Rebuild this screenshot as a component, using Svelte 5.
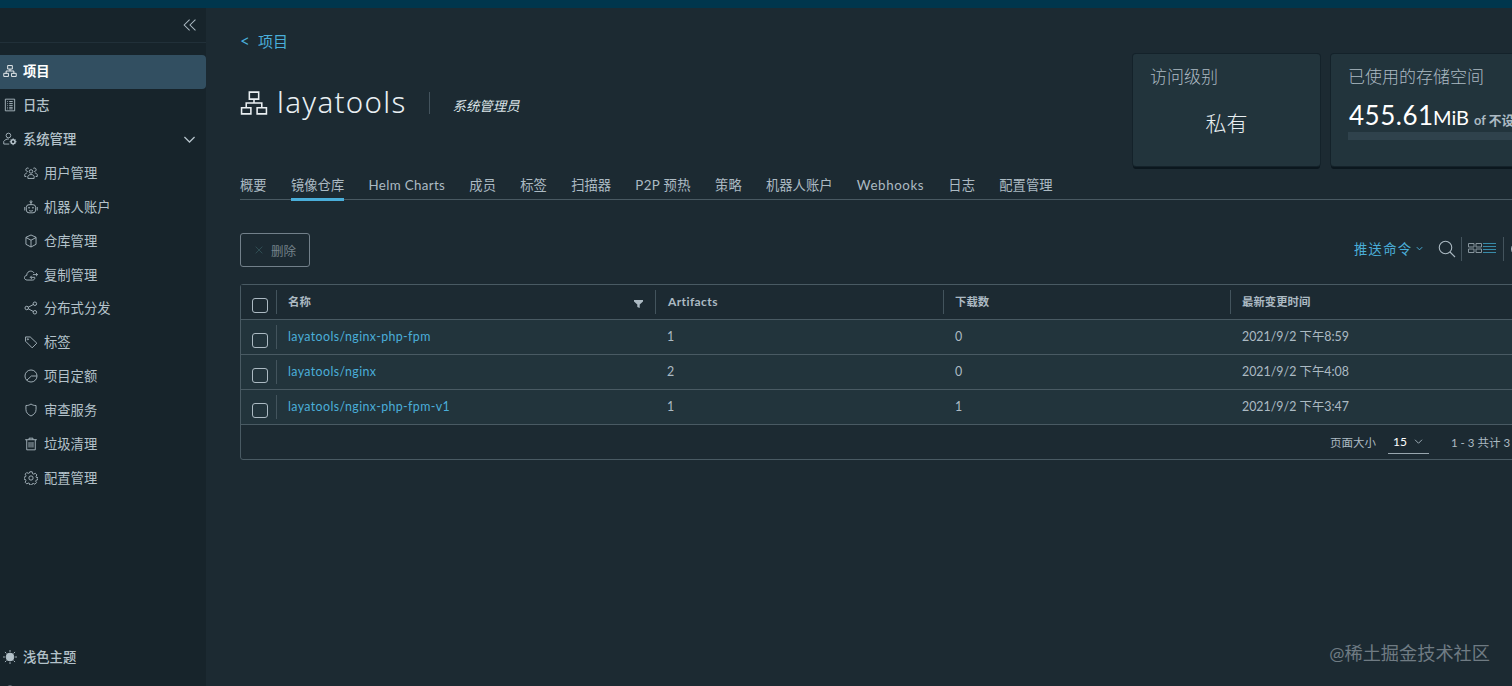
<script lang="ts">
	interface NavItem {
		icon: string;
		label: string;
	}

	interface Repo {
		name: string;
		artifacts: number;
		pulls: number;
		updated: string;
	}

	const ADMIN: NavItem[] = [
		{ icon: 'users', label: '用户管理' },
		{ icon: 'robot', label: '机器人账户' },
		{ icon: 'cube', label: '仓库管理' },
		{ icon: 'cloud', label: '复制管理' },
		{ icon: 'share', label: '分布式分发' },
		{ icon: 'tag', label: '标签' },
		{ icon: 'quota', label: '项目定额' },
		{ icon: 'shield', label: '审查服务' },
		{ icon: 'trash', label: '垃圾清理' },
		{ icon: 'cog', label: '配置管理' }
	];

	const TABS = [
		'概要',
		'镜像仓库',
		'Helm Charts',
		'成员',
		'标签',
		'扫描器',
		'P2P 预热',
		'策略',
		'机器人账户',
		'Webhooks',
		'日志',
		'配置管理'
	];

	const REPOS: Repo[] = [
		{ name: 'layatools/nginx-php-fpm', artifacts: 1, pulls: 0, updated: '2021/9/2 下午8:59' },
		{ name: 'layatools/nginx', artifacts: 2, pulls: 0, updated: '2021/9/2 下午4:08' },
		{ name: 'layatools/nginx-php-fpm-v1', artifacts: 1, pulls: 1, updated: '2021/9/2 下午3:47' }
	];

	let activeTab = $state('镜像仓库');
	let adminOpen = $state(true);
	let selected = $state<string[]>([]);

	function toggle(name: string) {
		selected = selected.includes(name) ? selected.filter((n) => n !== name) : [...selected, name];
	}

	function toggleAll() {
		selected = selected.length === REPOS.length ? [] : REPOS.map((r) => r.name);
	}
</script>

{#snippet icon(name: string)}
	<svg class="icon" viewBox="0 0 36 36" aria-hidden="true">
		{#if name === 'org'}
			<path d="M12 4h12v9H12zM2 24h12v8H2zM22 24h12v8H22zM18 13v5M8 24v-6h20v6" />
		{:else if name === 'list'}
			<path d="M6 3h24v30H6zM11 9h2M16 9h9M11 14h2M16 14h9M11 19h2M16 19h9M11 24h2M16 24h9M11 28h2M16 28h9" />
		{:else if name === 'admin'}
			<circle cx="14" cy="9" r="6" />
			<path d="M16 31H2v-7c3-4 7-6 13-6" />
			<circle cx="26" cy="25" r="5" stroke-width="4" />
			<path d="M26 16v4M26 30v4M17 25h4M31 25h4M20 19l2 2M30 29l2 2M32 19l-2 2M22 29l-2 2" />
		{:else if name === 'users'}
			<circle cx="18" cy="14" r="4.5" />
			<path d="M10 32v-6c2-3 5-4 8-4s6 1 8 4v6zM10 14a4.500 4.500 0 1 1 2-8M26 14a4.500 4.500 0 1 0-2-8M8 18c-3 0-5 2-6 4v5h4M28 18c3 0 5 2 6 4v5h-4" />
		{:else if name === 'robot'}
			<rect x="6" y="12" width="24" height="21" rx="7" />
			<path d="M18 12V7M2 18v9M34 18v9M13 27c3 2 7 2 10 0" />
			<circle cx="18" cy="4.500" r="2.500" />
			<circle cx="13" cy="20" r="1.200" />
			<circle cx="23" cy="20" r="1.200" />
		{:else if name === 'cube'}
			<path d="M18 2.500l13 6v18l-13 7-13-7v-18zM5 9l13 7 13-7M18 16v17" />
		{:else if name === 'cloud'}
			<path d="M28 25c0 3-2 6-6 6H8c-4 0-7-3-7-6s3-6 6-6c0-7 5-11 10-11 4 0 7 2 9 5M34 17H23M31 13l4 4-4 4M28 24H17M20 20l-4 4 4 4" />
		{:else if name === 'share'}
			<circle cx="7" cy="18" r="4.500" />
			<circle cx="28" cy="7" r="4.500" />
			<circle cx="28" cy="29" r="4.500" />
			<path d="M11 16l13-7M11 20l13 7" />
		{:else if name === 'tag'}
			<path d="M4 5h12l17 16-12 12L4 16z" />
			<circle cx="10" cy="11" r="1.500" />
		{:else if name === 'quota'}
			<circle cx="18" cy="18" r="15.500" />
			<path d="M7 29l12-11h14" />
		{:else if name === 'shield'}
			<path d="M18 2.500c4 3 8 4 13 4v10c0 8-5 13-13 17-8-4-13-9-13-17v-10c5 0 9-1 13-4z" />
		{:else if name === 'trash'}
			<path d="M3 7h30M7 7v26h22V7M13 7V3h10v4M13 13v14M18 13v14M23 13v14" />
		{:else if name === 'cog'}
			<path d="M15 2h6l1 5 3 1 4-2 4 4-2 4 1 3 4 0v5l-4 1-2 3 2 4-4 4-4-2-3 1-1 3h-5l-1-4-3-1-4 2-4-4 2-4-1-3-4-1v-5l4-1 1-3-2-4 4-4 4 2 3-1z" />
			<circle cx="18" cy="18" r="5.500" />
		{:else if name === 'sun'}
			<circle cx="18" cy="18" r="10" fill="currentColor" />
			<path d="M18 0v5M18 31v5M0 18h5M31 18h5M5 5l4 4M27 27l4 4M31 5l-4 4M9 27l-4 4" />
		{:else if name === 'api'}
			<circle cx="18" cy="18" r="15.500" />
			<path d="M12 18h12" />
		{:else if name === 'search'}
			<circle cx="15" cy="15" r="12.500" />
			<path d="M24 24l10 10" />
		{:else if name === 'close'}
			<path d="M6 6l24 24M30 6L6 30" />
		{:else if name === 'down'}
			<path d="M4 11l14 14 14-14" />
		{:else if name === 'collapse'}
			<path d="M17 4L3 18l14 14M32 4L18 18l14 14" />
		{/if}
	</svg>
{/snippet}

<div class="app">
	<header class="topbar"></header>
	<div class="body">
		<nav class="sidebar">
			<div class="collapse">{@render icon('collapse')}</div>
			<div class="nav-list">
				<a class="nav-item active" href="#projects">{@render icon('org')}<span>项目</span></a>
				<a class="nav-item" href="#logs">{@render icon('list')}<span>日志</span></a>
				<button class="nav-item" onclick={() => (adminOpen = !adminOpen)}>
					{@render icon('admin')}<span>系统管理</span>
					<i class="caret" class:closed={!adminOpen}>{@render icon('down')}</i>
				</button>
				{#if adminOpen}
					{#each ADMIN as item}
						<a class="nav-item sub" href="#{item.icon}">{@render icon(item.icon)}<span>{item.label}</span></a>
					{/each}
				{/if}
			</div>
			<div class="nav-bottom">
				<button class="nav-item">{@render icon('sun')}<span>浅色主题</span></button>
				<a class="nav-item api" href="#api">{@render icon('api')}<span>API控制中心</span></a>
			</div>
		</nav>

		<main class="content">
			<section class="head">
				<div class="title-area">
					<a class="back" href="#projects"><span class="lt">&lt;</span>项目</a>
					<div class="title">
						{@render icon('org')}
						<h1>layatools</h1>
						<em>系统管理员</em>
					</div>
				</div>
				<div class="card">
					<h4>访问级别</h4>
					<div class="access">私有</div>
				</div>
				<div class="card">
					<h4>已使用的存储空间</h4>
					<div class="usage">
						<span class="num">455.61</span><span class="unit">MiB</span><span class="of">of 不设限</span>
					</div>
					<div class="progress"></div>
				</div>
			</section>

			<div class="tabs">
				{#each TABS as tab}
					<button
						class="tab"
						class:latin={/^[A-Z]/.test(tab)}
						class:active={tab === activeTab}
						onclick={() => (activeTab = tab)}>{tab}</button
					>
				{/each}
			</div>

			<div class="toolbar">
				<button class="delete" disabled={!selected.length}>{@render icon('close')}删除</button>
				<div class="tools">
					<button class="push">推送命令{@render icon('down')}</button>
					<span class="search">{@render icon('search')}</span>
					<span class="views">
						<svg class="cards" viewBox="0 0 14 12">
							<path d="M.5 1.500h5.500v3.500H.5zM8 1.500h5.500v3.500H8zM.5 7h5.500v3.500H.5zM8 7h5.500v3.500H8z" />
						</svg>
						<svg class="rows" viewBox="0 0 14 12">
							<path d="M0 1.500h13M0 4.500h13M0 7.500h13M0 10.500h13" />
						</svg>
					</span>
					<span class="refresh">
						<svg viewBox="0 0 16 16"><circle cx="8" cy="8" r="6.500" /></svg>
					</span>
				</div>
			</div>

			<div class="grid">
				<div class="row header">
					<div class="check">
						<input type="checkbox" aria-label="全选" checked={selected.length === REPOS.length} onchange={toggleAll} />
					</div>
					<div class="cell">
						名称
						<svg class="filter" viewBox="0 0 9 8"><path d="M0 0h9v1.500L5.700 4.500V8L3.300 7V4.500L0 1.500z" /></svg>
					</div>
					<div class="cell latin">Artifacts</div>
					<div class="cell">下载数</div>
					<div class="cell">最新变更时间</div>
				</div>
				{#each REPOS as repo}
					<div class="row">
						<div class="check">
							<input
								type="checkbox"
								aria-label={repo.name}
								checked={selected.includes(repo.name)}
								onchange={() => toggle(repo.name)}
							/>
						</div>
						<div class="cell"><a href="#repo">{repo.name}</a></div>
						<div class="cell">{repo.artifacts}</div>
						<div class="cell">{repo.pulls}</div>
						<div class="cell">{repo.updated}</div>
					</div>
				{/each}
				<div class="footer">
					<span>页面大小</span>
					<span class="size">15{@render icon('down')}</span>
					<span class="range">1 - 3 共计 3 条记录</span>
				</div>
			</div>
		</main>
	</div>
	<div class="watermark">@稀土掘金技术社区</div>
</div>

<style>
	:global(body) {
		overflow: hidden;
		background: #1c2a32;
	}
	.app {
		position: relative;
		width: 100%;
		height: 686px;
		overflow: hidden;
		display: flex;
		flex-direction: column;
		background: #1c2a32;
		color: #acbac3;
		font-family: Lato, 'Noto Sans CJK SC', sans-serif;
		font-size: 13.3px;
		white-space: nowrap;
	}
	.app * {
		box-sizing: border-box;
	}
	button {
		margin: 0;
		padding: 0;
		border: 0;
		background: none;
		color: inherit;
		font: inherit;
	}
	a {
		color: #4aaed9;
		text-decoration: none;
	}
	.icon {
		width: 14px;
		height: 14px;
		flex: none;
		fill: none;
		stroke: currentColor;
		stroke-width: 2.2;
	}
	.topbar {
		height: 8px;
		flex: none;
		background: #00364d;
	}
	.body {
		flex: 1;
		min-height: 0;
		display: flex;
	}

	/* sidebar */
	.sidebar {
		width: 206px;
		flex: none;
		display: flex;
		flex-direction: column;
		background: #17242b;
	}
	.collapse {
		height: 35px;
		flex: none;
		display: flex;
		justify-content: flex-end;
		align-items: center;
		padding-right: 9px;
		border-bottom: 1px solid #213039;
	}
	.collapse .icon {
		stroke-width: 2.6;
	}
	.nav-list {
		flex: 1;
		padding-top: 11.8px;
	}
	.nav-item {
		width: 100%;
		height: 33.9px;
		display: flex;
		align-items: center;
		gap: 6px;
		padding: 0 10px 1px 3px;
		color: #b4c2ca;
		font-weight: 500;
		line-height: 20px;
	}
	.nav-item.active {
		background: #324f61;
		border-radius: 0 4px 4px 0;
		color: #fff;
		font-weight: 700;
	}
	.nav-item.sub {
		padding-left: 24px;
		font-weight: 400;
	}
	.caret {
		display: flex;
		margin-left: auto;
	}
	.caret .icon {
		width: 13px;
		height: 13px;
		stroke-width: 3.5;
	}
	.caret.closed {
		transform: rotate(-90deg);
	}
	.nav-bottom {
		height: 45px;
		flex: none;
	}
	.nav-item.api {
		margin-top: 2px;
	}
	.nav-item.api .icon {
		margin-top: -3px;
	}

	/* project header */
	.content {
		flex: 1;
		min-width: 0;
		padding-left: 34px;
		overflow: hidden;
	}
	.head {
		width: 1480px;
		height: 165px;
		display: grid;
		grid-template-columns: 883px 187px 400px;
		column-gap: 10px;
		align-items: start;
	}
	.title-area {
		padding-top: 21px;
	}
	.back {
		display: flex;
		align-items: center;
		height: 23px;
		font-size: 15px;
	}
	.lt {
		width: 18px;
		font-size: 17px;
	}
	.title {
		display: flex;
		align-items: center;
		height: 40px;
		margin-top: 31px;
		color: #e9eff2;
	}
	.title .icon {
		width: 28px;
		height: 28px;
		stroke-width: 2;
	}
	h1 {
		margin: -2px 22px 0 9px;
		font-family: 'Noto Sans', sans-serif;
		font-size: 29.5px;
		font-weight: 300;
		line-height: 36px;
		letter-spacing: 1.3px;
	}
	em {
		height: 22px;
		padding-left: 23px;
		border-left: 1px solid #43535d;
		font-size: 13.4px;
		line-height: 28px;
		color: #dde5e9;
	}
	.card {
		height: 112px;
		margin-top: 46px;
		padding: 10px 17px;
		background: #22343c;
		border-radius: 3px;
		box-shadow:
			0 0 0 1px #14222a,
			0 3px 0 0 #0b171e;
	}
	.card + .card {
		margin-left: 1px;
	}
	h4 {
		margin: 0;
		font-size: 17px;
		font-weight: 300;
		line-height: 26px;
	}
	.access {
		margin-top: 17px;
		text-align: center;
		font-size: 21px;
		font-weight: 300;
		line-height: 32px;
		color: #e9eff2;
	}
	.usage {
		display: flex;
		align-items: baseline;
		height: 32px;
		margin-top: 9px;
		padding-left: 1px;
		line-height: 32px;
		color: #fff;
	}
	.num {
		width: 84px;
		font-size: 26px;
		letter-spacing: 0.5px;
	}
	.unit {
		width: 41px;
		font-size: 20px;
	}
	.of {
		font-size: 12.8px;
		font-weight: 700;
		color: #acbac3;
	}
	.progress {
		height: 8px;
		margin-top: 1px;
		background: #2f424c;
	}

	/* tabs */
	.tabs {
		width: 1480px;
		height: 27px;
		display: flex;
		gap: 24.2px;
		border-bottom: 1px solid #495962;
	}
	.tab {
		height: 28px;
		padding-bottom: 1px;
		border-bottom: 3px solid transparent;
		line-height: 20px;
		letter-spacing: 0.05px;
	}
	.tab.latin {
		letter-spacing: 0.36px;
	}
	.tab:nth-child(10) {
		letter-spacing: 0.6px;
	}
	.tab.active {
		border-bottom-color: #4aaed9;
	}

	/* toolbar */
	.toolbar {
		height: 84px;
		display: flex;
		justify-content: space-between;
		padding-top: 33px;
	}
	.delete {
		width: 70px;
		height: 34px;
		display: flex;
		justify-content: center;
		align-items: center;
		gap: 7px;
		border: 1px solid #72808a;
		border-radius: 3px;
		font-size: 12.5px;
		color: #75838b;
	}
	.delete .icon {
		width: 10px;
		height: 10px;
		color: #3b6267;
	}
	.tools {
		width: 159px;
		height: 31px;
		display: flex;
		align-items: center;
		overflow: hidden;
	}
	.tools > * {
		flex: none;
	}
	.push {
		width: 85px;
		display: flex;
		align-items: center;
		gap: 4px;
		padding-left: 1px;
		color: #4aaed9;
		letter-spacing: 1.3px;
	}
	.push .icon {
		width: 7px;
		height: 7px;
		stroke-width: 5;
	}
	.search {
		width: 24px;
		height: 24px;
		display: flex;
		align-items: center;
		border-right: 1px solid #44545d;
	}
	.search .icon {
		width: 18px;
		height: 18px;
	}
	.views {
		width: 42px;
		height: 24px;
		display: flex;
		align-items: center;
		gap: 1px;
		padding: 0 0 1px 6px;
		border-right: 1px solid #44545d;
	}
	.views svg {
		width: 14px;
		height: 12px;
		fill: none;
		stroke: #87959d;
	}
	.views .rows {
		stroke: #388ba9;
	}
	.refresh {
		display: flex;
		margin-left: 6px;
	}
	.refresh svg {
		width: 16px;
		height: 16px;
		fill: none;
		stroke: #acbac3;
	}

	/* datagrid */
	.grid {
		width: 1480px;
		border: 1px solid #495a63;
		border-radius: 3px;
	}
	.row {
		height: 35px;
		display: grid;
		grid-template-columns: 36px 379px 288px 287px 1fr;
		background: #22343c;
		border-bottom: 1px solid #495a63;
	}
	.row.header {
		background: #1c2a32;
		font-weight: 700;
	}
	.check {
		height: 24px;
		margin-top: 5px;
		padding: 8px 0 0 11px;
		border-right: 1px solid #43545d;
	}
	input {
		display: block;
		width: 15.5px;
		height: 15px;
		margin: 0;
		appearance: none;
		border: 1px solid #acbac3;
		border-radius: 3px;
	}
	input:checked {
		background: #4aaed9;
	}
	.cell {
		display: flex;
		justify-content: space-between;
		height: 24px;
		margin-top: 5px;
		padding: 0 12px 0 11px;
		font-size: 12.4px;
		line-height: 23px;
	}
	.header .cell {
		font-size: 11.4px;
		line-height: 24px;
		border-right: 1px solid #43545d;
	}
	.header .cell.latin {
		padding-left: 12px;
		font-size: 12px;
		letter-spacing: 0.4px;
	}
	.header .cell:last-child {
		border-right: 0;
	}
	.cell a {
		letter-spacing: 0.38px;
	}
	.filter {
		width: 9px;
		height: 8px;
		margin-top: 10px;
		fill: #acbac3;
	}
	.footer {
		height: 34px;
		display: flex;
		align-items: center;
		padding-left: 1089px;
		font-size: 11.5px;
	}
	.size {
		width: 41px;
		height: 24px;
		display: flex;
		align-items: center;
		justify-content: space-between;
		margin: 0 22px 0 12px;
		padding: 0 6px 0 5px;
		border-bottom: 1px solid #98a6ae;
		font-size: 12px;
		color: #fff;
	}
	.size .icon {
		width: 9px;
		height: 9px;
		stroke-width: 3.5;
		color: #acbac3;
	}

	.watermark {
		position: absolute;
		right: 22px;
		bottom: 20px;
		font-size: 18.2px;
		line-height: 26px;
		color: #6f7b83;
	}
</style>
